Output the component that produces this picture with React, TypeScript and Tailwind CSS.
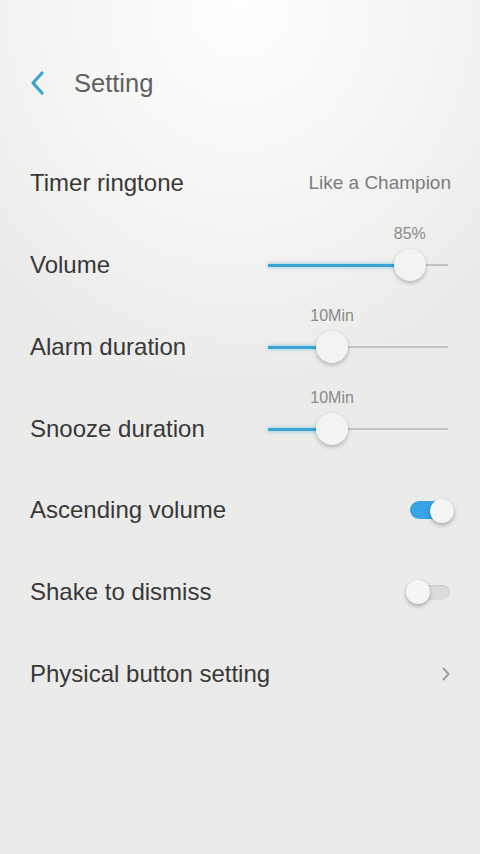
import { useState } from "react"

const font = { fontFamily: '"Liberation Sans", Arial, sans-serif' }

function Slider(props: { value: number; label: string }) {
    // thumb travels inside the track, 16px in from each end
    const left = 16 + props.value * 148
    return (
        <div className="relative w-[180px] h-[32px] flex items-center">
            <div className="absolute left-0 right-0 h-[2px] bg-[#c4c4c2]" />
            <div className="absolute left-0 h-[3px] bg-[#3aa3d4] shadow-[0_0_4px_rgba(58,163,212,0.6)]" style={{ width: left }} />
            <div className="absolute -top-[27px] -translate-x-1/2 text-[16px] text-[#8a8a8a]" style={{ left }}>{props.label}</div>
            <div className="absolute w-[32px] h-[32px] -translate-x-1/2 rounded-full bg-[#f3f3f3] shadow-[0_2px_4px_rgba(0,0,0,0.25)]" style={{ left }} />
        </div>
    )
}

function Toggle(props: { on: boolean; onClick: () => void }) {
    return (
        <div className="relative w-[42px] h-[28px] flex items-center cursor-pointer" onClick={props.onClick}>
            <div className={props.on ? "w-full h-[18px] rounded-full bg-[#38a4e6]" : "w-full h-[15px] rounded-full bg-[#dcdcda] shadow-[inset_0_1px_2px_rgba(0,0,0,0.1)]"} />
            <div className={props.on
                ? "absolute right-[-2px] top-[3px] w-[24px] h-[24px] rounded-full bg-[#f5f5f5] shadow-[0_2px_4px_rgba(0,0,0,0.3)]"
                : "absolute left-[-2px] top-[2px] w-[24px] h-[24px] rounded-full bg-[#f5f5f5] shadow-[0_2px_4px_rgba(0,0,0,0.3)]"} />
        </div>
    )
}

export default function App() {
    const [ascending, setAscending] = useState(true)
    const [shake, setShake] = useState(false)

    return (
        <div className="w-[480px] h-[854px] overflow-hidden flex flex-col bg-[radial-gradient(ellipse_70%_45%_at_50%_0%,#ffffff_0%,#f7f7f6_45%,#ebebe9_100%)]" style={font}>
            <div className="h-[50px] mt-[58px] flex items-center pl-[28px]">
                <svg width="18" height="26" viewBox="0 0 18 26" fill="none">
                    <path d="M14 3 L5 13 L14 23" stroke="#3ca3d6" strokeWidth="3.2" strokeLinecap="round" strokeLinejoin="round" />
                </svg>
                <span className="ml-[28px] text-[25.5px] text-[#606060]">Setting</span>
            </div>

            <div className="mt-[34px] h-[82px] flex items-center justify-between pl-[30px] pr-[29px]">
                <span className="text-[24px] text-[#383838]">Timer ringtone</span>
                <span className="text-[19px] text-[#7d7d7d]">Like a Champion</span>
            </div>

            <div className="h-[82px] flex items-center justify-between pl-[30px] pr-[32px]">
                <span className="text-[24px] text-[#383838]">Volume</span>
                <Slider value={0.85} label="85%" />
            </div>

            <div className="h-[82px] flex items-center justify-between pl-[30px] pr-[32px]">
                <span className="text-[24px] text-[#383838]">Alarm duration</span>
                <Slider value={0.325} label="10Min" />
            </div>

            <div className="h-[82px] flex items-center justify-between pl-[30px] pr-[32px]">
                <span className="text-[24px] text-[#383838]">Snooze duration</span>
                <Slider value={0.325} label="10Min" />
            </div>

            <div className="h-[80px] flex items-center justify-between pl-[30px] pr-[28px]">
                <span className="text-[24px] text-[#383838]">Ascending volume</span>
                <Toggle on={ascending} onClick={() => setAscending(!ascending)} />
            </div>

            <div className="h-[84px] flex items-center justify-between pl-[30px] pr-[30px]">
                <span className="text-[24px] text-[#383838]">Shake to dismiss</span>
                <Toggle on={shake} onClick={() => setShake(!shake)} />
            </div>

            <div className="h-[80px] flex items-center justify-between pl-[30px] pr-[29px]">
                <span className="text-[24px] text-[#383838]">Physical button setting</span>
                <svg width="10" height="16" viewBox="0 0 10 16" fill="none">
                    <path d="M2.5 2.5 L7.5 8 L2.5 13.5" stroke="#a0a0a0" strokeWidth="2" strokeLinecap="round" strokeLinejoin="round" />
                </svg>
            </div>
        </div>
    )
}
